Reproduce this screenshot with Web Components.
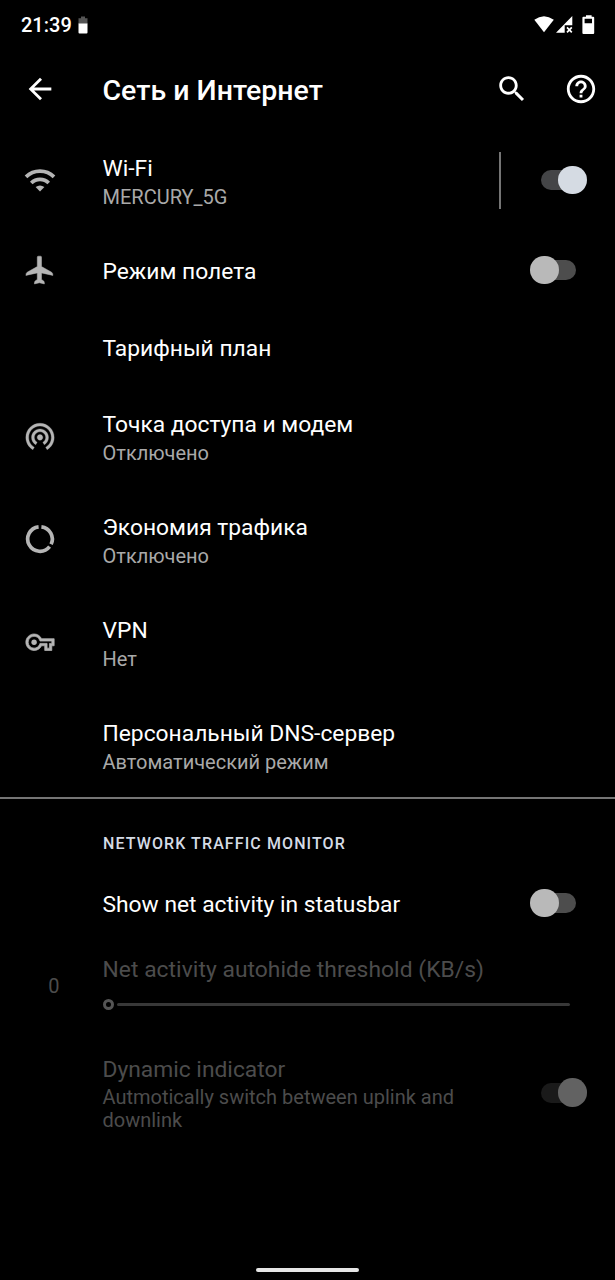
<!DOCTYPE html>
<html lang="ru">
<head>
<meta charset="utf-8">
<title>Сеть и Интернет</title>
<style>
  html, body {
    margin: 0;
    height: 100%;
    background: #000;
  }
  body {
    font-family: Roboto, "Noto Sans", sans-serif;
    color: #fff;
    overflow: hidden;
  }
</style>
</head>
<body>
<settings-screen>
  <status-bar slot="status" time="21:39"></status-bar>
  <app-toolbar slot="toolbar">Сеть и Интернет</app-toolbar>

  <settings-row icon="wifi">
    Wi-Fi
    <span slot="summary">MERCURY_5G</span>
    <toggle-switch slot="widget" checked divided></toggle-switch>
  </settings-row>
  <settings-row icon="plane" single>
    Режим полета
    <toggle-switch slot="widget"></toggle-switch>
  </settings-row>
  <settings-row single>Тарифный план</settings-row>
  <settings-row icon="hotspot">Точка доступа и модем<span slot="summary">Отключено</span></settings-row>
  <settings-row icon="saver">Экономия трафика<span slot="summary">Отключено</span></settings-row>
  <settings-row icon="key">VPN<span slot="summary">Нет</span></settings-row>
  <settings-row>Персональный DNS-сервер<span slot="summary">Автоматический режим</span></settings-row>

  <settings-category>Network traffic monitor</settings-category>
  <settings-row single>
    Show net activity in statusbar
    <toggle-switch slot="widget"></toggle-switch>
  </settings-row>
  <seek-row value="0">Net activity autohide threshold (KB/s)</seek-row>
  <settings-row disabled>
    Dynamic indicator
    <span slot="summary">Autmotically switch between uplink and downlink</span>
    <toggle-switch slot="widget" checked disabled></toggle-switch>
  </settings-row>
</settings-screen>

<script>
(function() {
  const icons = {
    wifi: `<svg viewBox="0 0 34 34"><g fill="none" stroke="currentColor" stroke-width="3.7"><path d="M3 13.9A19.9 19.9 0 0 1 31 13.9"/><path d="M8.3 20A12.2 12.2 0 0 1 25.7 20"/></g><path fill="currentColor" d="M12.6 24Q17 21 21.4 24L17 28.4Z"/></svg>`,
    plane: `<svg viewBox="0 0 34 34"><path fill="currentColor" stroke="currentColor" stroke-width=".5" stroke-linejoin="round" d="M14.3 4.2Q14.3 3.2 15.3 3.2H17.5Q18.5 3.2 18.5 4.2V13.6L28.6 19.2Q29.9 20 29.9 22.4L18.5 19.9V26.4L20.7 28Q21.4 28.7 21.4 30.9L16.4 29.8L11.4 30.9Q11.4 28.7 12.1 28L14.3 26.4V19.9L2.9 22.4Q2.9 20 4.2 19.2L14.3 13.6Z"/></svg>`,
    hotspot: `<svg viewBox="0 0 24 24"><path fill="currentColor" stroke="currentColor" stroke-width=".2" d="M12 11c-1.1 0-2 .9-2 2s.9 2 2 2 2-.9 2-2-.9-2-2-2zm6 2c0-3.31-2.69-6-6-6s-6 2.69-6 6c0 2.22 1.21 4.15 3 5.19l1-1.74c-1.19-.7-2-1.97-2-3.45 0-2.21 1.79-4 4-4s4 1.79 4 4c0 1.48-.81 2.75-2 3.45l1 1.74c1.79-1.04 3-2.97 3-5.19zM12 3C6.48 3 2 7.48 2 13c0 3.7 2.01 6.92 4.99 8.65l1-1.73C5.61 18.53 4 15.96 4 13c0-4.42 3.58-8 8-8s8 3.58 8 8c0 2.96-1.61 5.53-4 6.92l1 1.73c2.99-1.73 5-4.95 5-8.65 0-5.52-4.48-10-10-10z"/></svg>`,
    saver: `<svg viewBox="0 0 34 34"><g fill="none" stroke="currentColor" stroke-width="3.7"><path d="M18.4 4.8A12.3 12.3 0 0 1 28.1 22.3"/><path d="M26.6 24.7A12.3 12.3 0 1 1 15.6 4.8"/></g></svg>`,
    key: `<svg viewBox="-2.4 -2.6 28.8 28.8"><path fill="currentColor" stroke="currentColor" stroke-width=".6" d="M22 19h-6v-4h-2.68c-1.14 2.42-3.6 4-6.32 4-3.86 0-7-3.14-7-7s3.14-7 7-7c2.72 0 5.17 1.58 6.32 4H24v6h-2v4zm-4-2h2v-4h2v-2H11.94l-.23-.67C11.01 8.34 9.11 7 7 7c-2.76 0-5 2.24-5 5s2.24 5 5 5c2.11 0 4.01-1.34 4.71-3.33l.23-.67H18v4z"/><circle cx="7" cy="12" r="2.3" fill="currentColor"/></svg>`
  };

  function define(name, html, setup) {
    const template = document.createElement("template");
    template.innerHTML = html;

    customElements.define(name, class extends HTMLElement {
      constructor() {
        super();
        this.attachShadow({ mode: "open" });
        this.shadowRoot.appendChild(template.content.cloneNode(true));
      }

      connectedCallback() {
        if (setup) setup(this, this.shadowRoot);
      }
    });
  }

  define("status-bar", `
    <style>
    :host {
      display: flex;
      align-items: center;
      height: 50px;
      padding: 0 20px 0 21px;
      box-sizing: border-box;
    }
    .time {
      font-size: 20px;
      font-weight: 500;
      line-height: 24px;
      margin-right: 6.5px;
    }
    svg { display: block; }
    .system { margin-left: auto; }
    </style>
    <span class="time"></span>
    <svg width="10" height="18" viewBox="0 0 10 18">
      <path fill="#555" d="M.5 2.2H3V.5H7V2.2H9.5V8H.5Z"/>
      <path fill="#fff" d="M.5 7.5H9.5V16.5Q9.5 17.5 8.5 17.5H1.5Q.5 17.5 .5 16.5Z"/>
    </svg>
    <svg class="system" width="61" height="20" viewBox="0 0 61 20">
      <g fill="#fff">
        <path d="M.3 4.7Q10 -2.3 19.8 4.7L10 17.2Z"/>
        <path d="M38.3 1V10.3H30.7V17.8H22Z"/>
        <path fill-rule="evenodd" d="M50.4 1.8H52V.2H57.6V1.8H59.2Q60.2 1.8 60.2 2.8V18Q60.2 19 59.2 19H49.4Q48.4 19 48.4 18V2.8Q48.4 1.8 49.4 1.8ZM50.6 3.8V8.2H58V3.8Z"/>
      </g>
      <path stroke="#fff" stroke-width="1.7" d="M33 12.3L37.8 17.3M37.8 12.3L33 17.3"/>
    </svg>
    `, (host, root) => {
      root.querySelector(".time").textContent = host.getAttribute("time");
    });

  define("app-toolbar", `
    <style>
    :host {
      display: flex;
      align-items: center;
      height: 78.5px;
      padding: 0 17px 0 22.5px;
      box-sizing: border-box;
    }
    h1 {
      flex: 1;
      margin: 3px 0 0 46px;
      font-size: 28.5px;
      font-weight: 500;
      line-height: 34px;
    }
    svg {
      width: 34px;
      height: 34px;
      fill: #fff;
    }
    .help { margin-left: 35px; }
    </style>
    <svg viewBox="0 0 24 24"><path d="M20 11H7.83l5.59-5.59L12 4l-8 8 8 8 1.41-1.41L7.83 13H20v-2z"/></svg>
    <h1><slot></slot></h1>
    <svg viewBox="0 0 24 24"><path d="M15.5 14h-.79l-.28-.27C15.41 12.59 16 11.11 16 9.5 16 5.91 13.09 3 9.5 3S3 5.91 3 9.5 5.91 16 9.5 16c1.61 0 3.09-.59 4.23-1.57l.27.28v.79l5 4.99L20.49 19l-4.99-5zm-6 0C7.01 14 5 11.99 5 9.5S7.01 5 9.5 5 14 7.01 14 9.5 11.99 14 9.5 14z"/></svg>
    <svg class="help" viewBox="0 0 24 24"><path d="M11 18h2v-2h-2v2zm1-16C6.48 2 2 6.48 2 12s4.48 10 10 10 10-4.48 10-10S17.52 2 12 2zm0 18c-4.41 0-8-3.59-8-8s3.59-8 8-8 8 3.59 8 8-3.59 8-8 8zm0-14c-2.21 0-4 1.79-4 4h2c0-1.1.9-2 2-2s2 .9 2 2c0 2-3 1.75-3 5h2c0-2.25 3-2.5 3-5 0-2.21-1.79-4-4-4z"/></svg>
    `);

  define("toggle-switch", `
    <style>
    :host {
      display: flex;
      align-items: center;
      --thumb: #b9b9b9;
      --track: #4d4d4d;
    }
    :host([checked]) {
      --thumb: #d5dbe3;
      --track: #444547;
    }
    :host([disabled]) {
      --thumb: #626262;
      --track: #1a1a1a;
    }
    .line {
      display: none;
      width: 2px;
      height: 57px;
      margin-right: 29px;
      background: #757575;
    }
    :host([divided]) .line { display: block; }
    .switch {
      position: relative;
      width: 57px;
      height: 29px;
      display: flex;
      align-items: center;
      justify-content: center;
    }
    .track {
      width: 35px;
      height: 20px;
      border-radius: 10px;
      background: var(--track);
    }
    .thumb {
      position: absolute;
      left: 0;
      top: 0;
      width: 28.6px;
      height: 28.6px;
      border-radius: 50%;
      background: var(--thumb);
    }
    :host([checked]) .thumb {
      left: auto;
      right: 0;
    }
    </style>
    <div class="line"></div>
    <div class="switch">
      <div class="track"></div>
      <div class="thumb"></div>
    </div>
    `);

  define("settings-row", `
    <style>
    :host {
      display: flex;
      align-items: center;
      height: 103px;
      padding: 0 28px 0 23px;
      box-sizing: border-box;
    }
    :host([single]) {
      height: 76.5px;
      padding-top: 1px;
    }
    :host([disabled]) {
      --title: #4c4c4c;
      --summary: #4c4c4c;
    }
    .icon {
      flex: none;
      width: 34px;
      height: 34px;
      margin-right: 45.5px;
      color: #b5b5b5;
    }
    .icon svg {
      display: block;
      width: 34px;
      height: 34px;
    }
    .text {
      flex: 1;
      padding: 4px 40px 0 0;
    }
    :host([single]) .text { padding-top: 2.5px; }
    :host([disabled]) .text { padding-top: 3px; }
    .title {
      font-size: 22.8px;
      line-height: 27px;
      color: var(--title, #fff);
    }
    .summary {
      font-size: 20px;
      line-height: 23px;
      margin-top: 4px;
      color: var(--summary, #a9a9a9);
    }
    :host([disabled]) .summary { margin-top: 3px; }
    :host([single]) .summary { display: none; }
    </style>
    <div class="icon"></div>
    <div class="text">
      <div class="title"><slot></slot></div>
      <div class="summary"><slot name="summary"></slot></div>
    </div>
    <slot name="widget"></slot>
    `, (host, root) => {
      root.querySelector(".icon").innerHTML = icons[host.getAttribute("icon")] || "";
    });

  define("settings-category", `
    <style>
    :host {
      display: block;
      height: 68px;
      padding: 35px 0 0 103px;
      box-sizing: border-box;
      border-top: 2px solid #757575;
      font-size: 16px;
      font-weight: 500;
      line-height: 20px;
      letter-spacing: 1.1px;
      text-transform: uppercase;
      color: #d5dbe5;
    }
    </style>
    <slot></slot>
    `);

  define("seek-row", `
    <style>
    :host {
      display: flex;
      align-items: center;
      height: 89px;
      padding: 0 45.5px 0 5px;
      box-sizing: border-box;
      color: #4c4c4c;
    }
    .value {
      width: 97.5px;
      text-align: center;
      font-size: 20px;
      line-height: 24px;
    }
    .body {
      flex: 1;
      padding-bottom: 5px;
    }
    .title {
      font-size: 22.8px;
      line-height: 27px;
      letter-spacing: .05px;
    }
    .seek {
      display: flex;
      align-items: center;
      gap: 3px;
      margin-top: 16px;
    }
    .thumb {
      width: 11.5px;
      height: 11.5px;
      box-sizing: border-box;
      border: 3px solid #555;
      border-radius: 50%;
    }
    .bar {
      flex: 1;
      height: 3px;
      border-radius: 2px;
      background: #383838;
    }
    </style>
    <div class="value"></div>
    <div class="body">
      <div class="title"><slot></slot></div>
      <div class="seek">
        <div class="thumb"></div>
        <div class="bar"></div>
      </div>
    </div>
    `, (host, root) => {
      root.querySelector(".value").textContent = host.getAttribute("value");
    });

  define("settings-screen", `
    <style>
    :host {
      display: flex;
      flex-direction: column;
      width: 615px;
      height: 1280px;
      background: #000;
    }
    main {
      flex: 1;
      min-height: 0;
    }
    ::slotted(settings-row[disabled]) { margin-top: 11px; }
    .pill {
      align-self: center;
      width: 103px;
      height: 4px;
      margin-bottom: 8px;
      border-radius: 2px;
      background: #e6e6e6;
    }
    </style>
    <slot name="status"></slot>
    <slot name="toolbar"></slot>
    <main><slot></slot></main>
    <div class="pill"></div>
    `);
})();
</script>
</body>
</html>
